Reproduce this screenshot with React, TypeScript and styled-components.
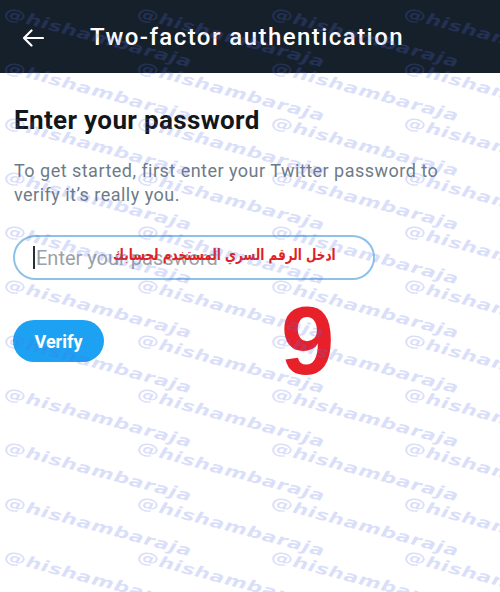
import React from "react";
import styled, { createGlobalStyle } from "styled-components";

const Global = createGlobalStyle`
  html, body { margin: 0; padding: 0; background: #ffffff; }
  body { font-family: Roboto, "Noto Sans", Arial, sans-serif; }
  * { box-sizing: border-box; }
`;

const Page = styled.div`
  position: relative;
  width: 500px;
  height: 592px;
  overflow: hidden;
  background: #ffffff;
`;

const Header = styled.header`
  height: 73px;
  background: #15202b;
  display: flex;
  align-items: center;
  padding-left: 22px;
  gap: 46px;
`;

const BackButton = styled.div`
  width: 22px;
  height: 22px;
  display: flex;
  align-items: center;
  justify-content: center;
  margin-top: 2px;
`;

const Title = styled.h1`
  margin: 0;
  color: #ffffff;
  font-family: Roboto, sans-serif;
  font-weight: 500;
  font-size: 24px;
  letter-spacing: 1.45px;
`;

const Content = styled.main`
  padding: 0 13px;
  display: flex;
  flex-direction: column;
  align-items: flex-start;
`;

const Heading = styled.h2`
  margin: 30px 0 0 1px;
  font-family: Roboto, sans-serif;
  font-weight: 700;
  font-size: 26px;
  line-height: 34px;
  letter-spacing: 0.35px;
  color: #14171a;
`;

const Subtitle = styled.p`
  margin: 22px 0 0 1px;
  font-family: Roboto, sans-serif;
  font-size: 18px;
  line-height: 24px;
  letter-spacing: 0.48px;
  color: #6e7b87;
`;

const Field = styled.div`
  position: relative;
  margin-top: 28px;
  width: 362px;
  height: 45px;
  border: 2px solid #8ec1e8;
  border-radius: 23px;
  display: flex;
  align-items: center;
  padding-left: 18px;
`;

const Caret = styled.span`
  width: 2px;
  height: 23px;
  background: #2a2f35;
  margin-right: 1px;
`;

const Placeholder = styled.span`
  font-family: Roboto, sans-serif;
  font-size: 20px;
  color: #9aa1a8;
`;

const Annotation = styled.span`
  position: absolute;
  left: 98px;
  top: 11px;
  direction: rtl;
  font-family: "DejaVu Sans", sans-serif;
  font-weight: 700;
  font-size: 12px;
  line-height: 14px;
  color: #e01f26;
  white-space: nowrap;
  transform: scaleY(1.3);
`;

const Actions = styled.div`
  position: relative;
  margin-top: 40px;
  width: 100%;
`;

const VerifyButton = styled.button`
  width: 91px;
  height: 42px;
  border: none;
  border-radius: 21px;
  background: #1da1f2;
  color: #ffffff;
  font-family: Roboto, sans-serif;
  font-weight: 700;
  font-size: 18px;
  padding: 0;
`;

const StepNumber = styled.span`
  position: absolute;
  left: 268px;
  top: -27px;
  font-family: "Liberation Sans", Arial, sans-serif;
  font-weight: 700;
  font-size: 96px;
  line-height: 1;
  color: #e8202a;
`;

const Watermarks = styled.div`
  position: absolute;
  inset: 0;
  pointer-events: none;
  display: grid;
  grid-template-columns: repeat(4, 133.33px);
  grid-auto-rows: 54.3px;
  padding: 4px 0 0 7px;
  overflow: hidden;
`;

const Mark = styled.span`
  display: block;
  font-family: "DejaVu Sans", sans-serif;
  font-weight: 700;
  font-style: italic;
  font-size: 15.5px;
  line-height: 18px;
  letter-spacing: 0.3px;
  white-space: nowrap;
  color: rgba(90, 110, 230, 0.22);
  transform-origin: 0 0;
  transform: rotate(15deg) scaleX(1.4);
`;

function ArrowLeft() {
  return (
    <svg width="22" height="18" viewBox="0 0 22 18" fill="none">
      <path
        d="M21 9H2M9.5 1.5L2 9l7.5 7.5"
        stroke="#ffffff"
        strokeWidth="2.2"
        strokeLinecap="round"
        strokeLinejoin="round"
      />
    </svg>
  );
}

export default function App() {
  const marks = Array.from({ length: 44 });
  return (
    <Page>
      <Global />
      <Header>
        <BackButton>
          <ArrowLeft />
        </BackButton>
        <Title>Two-factor authentication</Title>
      </Header>
      <Content>
        <Heading>Enter your password</Heading>
        <Subtitle>
          To get started, first enter your Twitter password to
          <br />
          verify it’s really you.
        </Subtitle>
        <Field>
          <Caret />
          <Placeholder>Enter your password</Placeholder>
          <Annotation>ادخل الرقم السري المستخدم لحسابك</Annotation>
        </Field>
        <Actions>
          <VerifyButton>Verify</VerifyButton>
          <StepNumber>9</StepNumber>
        </Actions>
      </Content>
      <Watermarks>
        {marks.map((_, i) => (
          <Mark key={i}>@hishambaraja</Mark>
        ))}
      </Watermarks>
    </Page>
  );
}
